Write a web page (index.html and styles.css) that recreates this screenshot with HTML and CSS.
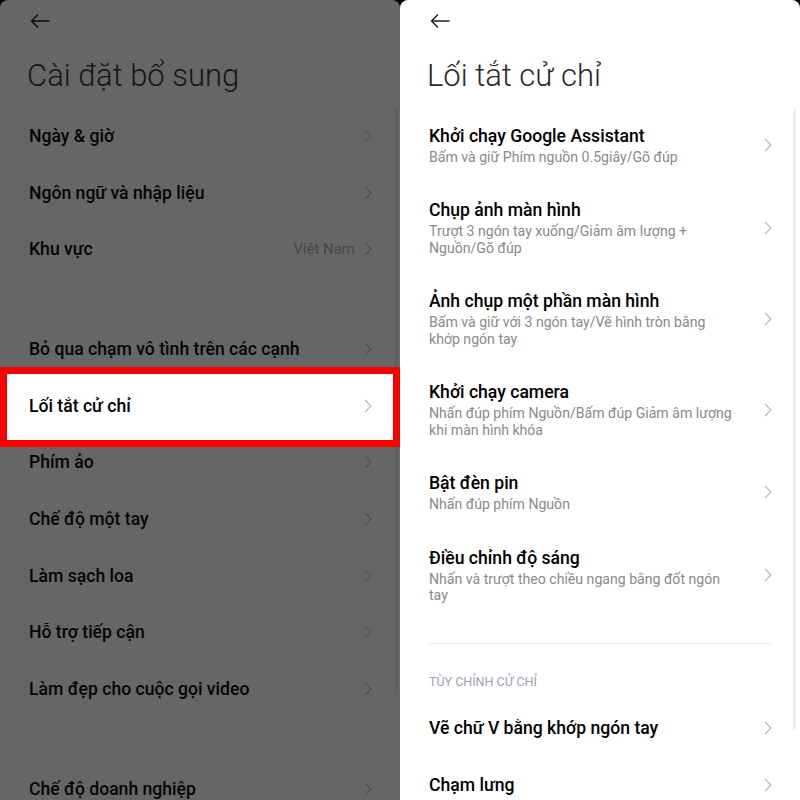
FILE: index.html
```html
<!DOCTYPE html>
<html lang="vi">
<head>
<meta charset="utf-8">
<link rel="stylesheet" href="styles.css">
</head>
<body>
<div class="screen">
  <section class="panel panel-dim">
    <div class="scrollbar scrollbar-dim"></div>
    <header class="head">
      <svg class="back" width="20" height="14" viewBox="0 0 20 14"><path d="M19 7H1.5M7.5 1L1.5 7l6 6" fill="none" stroke="currentColor" stroke-width="1.5" stroke-linecap="round" stroke-linejoin="round"/></svg>
      <h1 class="title">Cài đặt bổ sung</h1>
    </header>
    <div class="row"><span class="label">Ngày &amp; giờ</span><svg class="chev" width="8" height="14" viewBox="0 0 8 14"><path d="M1 1l6 6-6 6" fill="none" stroke="currentColor" stroke-width="1.1"/></svg></div>
    <div class="row"><span class="label">Ngôn ngữ và nhập liệu</span><svg class="chev" width="8" height="14" viewBox="0 0 8 14"><path d="M1 1l6 6-6 6" fill="none" stroke="currentColor" stroke-width="1.1"/></svg></div>
    <div class="row"><span class="label">Khu vực</span><span class="value">Việt Nam</span><svg class="chev" width="8" height="14" viewBox="0 0 8 14"><path d="M1 1l6 6-6 6" fill="none" stroke="currentColor" stroke-width="1.1"/></svg></div>
    <div class="divider"></div>
    <div class="row"><span class="label">Bỏ qua chạm vô tình trên các cạnh</span><svg class="chev" width="8" height="14" viewBox="0 0 8 14"><path d="M1 1l6 6-6 6" fill="none" stroke="currentColor" stroke-width="1.1"/></svg></div>
    <div class="row row-hl"><span class="label">Lối tắt cử chỉ</span><svg class="chev" width="8" height="14" viewBox="0 0 8 14"><path d="M1 1l6 6-6 6" fill="none" stroke="currentColor" stroke-width="1.1"/></svg></div>
    <div class="row"><span class="label">Phím ảo</span><svg class="chev" width="8" height="14" viewBox="0 0 8 14"><path d="M1 1l6 6-6 6" fill="none" stroke="currentColor" stroke-width="1.1"/></svg></div>
    <div class="row"><span class="label">Chế độ một tay</span><svg class="chev" width="8" height="14" viewBox="0 0 8 14"><path d="M1 1l6 6-6 6" fill="none" stroke="currentColor" stroke-width="1.1"/></svg></div>
    <div class="row"><span class="label">Làm sạch loa</span><svg class="chev" width="8" height="14" viewBox="0 0 8 14"><path d="M1 1l6 6-6 6" fill="none" stroke="currentColor" stroke-width="1.1"/></svg></div>
    <div class="row"><span class="label">Hỗ trợ tiếp cận</span><svg class="chev" width="8" height="14" viewBox="0 0 8 14"><path d="M1 1l6 6-6 6" fill="none" stroke="currentColor" stroke-width="1.1"/></svg></div>
    <div class="row"><span class="label">Làm đẹp cho cuộc gọi video</span><svg class="chev" width="8" height="14" viewBox="0 0 8 14"><path d="M1 1l6 6-6 6" fill="none" stroke="currentColor" stroke-width="1.1"/></svg></div>
    <div class="divider"></div>
    <div class="row"><span class="label">Chế độ doanh nghiệp</span><svg class="chev" width="8" height="14" viewBox="0 0 8 14"><path d="M1 1l6 6-6 6" fill="none" stroke="currentColor" stroke-width="1.1"/></svg></div>
  </section>

  <section class="panel panel-light">
    <div class="scrollbar scrollbar-light"></div>
    <header class="head">
      <svg class="back" width="20" height="14" viewBox="0 0 20 14"><path d="M19 7H1.5M7.5 1L1.5 7l6 6" fill="none" stroke="currentColor" stroke-width="1.5" stroke-linecap="round" stroke-linejoin="round"/></svg>
      <h1 class="title">Lối tắt cử chỉ</h1>
    </header>
    <div class="item"><div class="text"><div class="label">Khởi chạy Google Assistant</div><div class="sub">Bấm và giữ Phím nguồn 0.5giây/Gõ đúp</div></div><svg class="chev" width="8" height="14" viewBox="0 0 8 14"><path d="M1 1l6 6-6 6" fill="none" stroke="currentColor" stroke-width="1.1"/></svg></div>
    <div class="item"><div class="text"><div class="label">Chụp ảnh màn hình</div><div class="sub">Trượt 3 ngón tay xuống/Giảm âm lượng +<br>Nguồn/Gõ đúp</div></div><svg class="chev" width="8" height="14" viewBox="0 0 8 14"><path d="M1 1l6 6-6 6" fill="none" stroke="currentColor" stroke-width="1.1"/></svg></div>
    <div class="item"><div class="text"><div class="label">Ảnh chụp một phần màn hình</div><div class="sub">Bấm và giữ với 3 ngón tay/Vẽ hình tròn bằng<br>khớp ngón tay</div></div><svg class="chev" width="8" height="14" viewBox="0 0 8 14"><path d="M1 1l6 6-6 6" fill="none" stroke="currentColor" stroke-width="1.1"/></svg></div>
    <div class="item"><div class="text"><div class="label">Khởi chạy camera</div><div class="sub">Nhấn đúp phím Nguồn/Bấm đúp Giảm âm lượng<br>khi màn hình khóa</div></div><svg class="chev" width="8" height="14" viewBox="0 0 8 14"><path d="M1 1l6 6-6 6" fill="none" stroke="currentColor" stroke-width="1.1"/></svg></div>
    <div class="item"><div class="text"><div class="label">Bật đèn pin</div><div class="sub">Nhấn đúp phím Nguồn</div></div><svg class="chev" width="8" height="14" viewBox="0 0 8 14"><path d="M1 1l6 6-6 6" fill="none" stroke="currentColor" stroke-width="1.1"/></svg></div>
    <div class="item"><div class="text"><div class="label">Điều chỉnh độ sáng</div><div class="sub">Nhấn và trượt theo chiều ngang bằng đốt ngón<br>tay</div></div><svg class="chev" width="8" height="14" viewBox="0 0 8 14"><path d="M1 1l6 6-6 6" fill="none" stroke="currentColor" stroke-width="1.1"/></svg></div>
    <div class="divider divider-light"></div>
    <div class="section">TÙY CHỈNH CỬ CHỈ</div>
    <div class="row"><span class="label">Vẽ chữ V bằng khớp ngón tay</span><svg class="chev" width="8" height="14" viewBox="0 0 8 14"><path d="M1 1l6 6-6 6" fill="none" stroke="currentColor" stroke-width="1.1"/></svg></div>
    <div class="row"><span class="label">Chạm lưng</span><svg class="chev" width="8" height="14" viewBox="0 0 8 14"><path d="M1 1l6 6-6 6" fill="none" stroke="currentColor" stroke-width="1.1"/></svg></div>
  </section>
</div>
</body>
</html>
```

FILE: styles.css
```css
* { box-sizing: border-box; }
html, body { margin: 0; padding: 0; background: #000; }
body { font-family: Roboto, "Noto Sans", "Liberation Sans", sans-serif; }

.screen {
  display: flex;
  width: 800px;
  height: 800px;
  overflow: hidden;
}

.panel {
  position: relative;
  width: 400px;
  height: 800px;
  overflow: hidden;
  border-radius: 8px 8px 0 0;
}
.panel-dim { background: #666666; color: #050505; }
.panel-light { background: #ffffff; color: #000; }

.scrollbar {
  position: absolute;
  right: 2px;
  top: 107px;
  width: 3px;
  border-radius: 2px;
}
.scrollbar-dim { height: 588px; background: #5f5f5f; }
.scrollbar-light { right: 4px; height: 623px; background: #f0f0f0; }

.head {
  height: 107.5px;
  padding: 14px 0 0 0;
}
.back { display: block; margin-left: 30px; }
.panel-dim .back { color: #0d0d0d; }
.panel-light .back { color: #222; }

.title {
  margin: 28px 0 0 27px;
  font-size: 31px;
  line-height: 40px;
  font-weight: 300;
  letter-spacing: 0;
}
.panel-dim .title { color: #161616; }
.panel-light .title { color: #2a2a2a; }

.row {
  position: relative;
  display: flex;
  align-items: center;
  height: 56.7px;
  padding: 0 28px 0 29px;
}
.row .label {
  flex: 1;
  font-size: 17.6px;
  font-weight: 500;
  line-height: 22px;
}
.value {
  font-size: 15px;
  color: #474747;
  margin-right: 9px;
}
.chev { flex: none; display: block; }
.panel-dim .chev { color: #4f4f4f; }
.panel-light .chev { color: #b8b8b8; }

.row-hl > * { position: relative; z-index: 1; }
.row-hl::before {
  content: "";
  position: absolute;
  left: 0;
  right: 0;
  top: -9.8px;
  bottom: -13.5px;
  background: #fff;
  border: 7px solid #ff0000;
  z-index: 0;
}
.row-hl .label { color: #000; }
.panel-dim .row-hl .chev { color: #b8b8b8; }

.divider {
  height: 1px;
  margin: 20px 28px 22px 29px;
  background: #616161;
}
.divider-light {
  background: #ececec;
  margin: 22px 28px 0 28px;
}

.item {
  display: flex;
  align-items: center;
  padding: 17px 28px 17px 29px;
}
.item .text { flex: 1; min-width: 0; }
.item .label {
  font-size: 17.6px;
  font-weight: 500;
  line-height: 22px;
  color: #000;
}
.item .sub {
  margin-top: 2px;
  font-size: 14.1px;
  line-height: 16.5px;
  color: #8a8a8a;
  white-space: nowrap;
}

.section {
  padding: 30px 0 10px 29px;
  font-size: 12.5px;
  line-height: 16px;
  color: #9aa1b4;
}
```
